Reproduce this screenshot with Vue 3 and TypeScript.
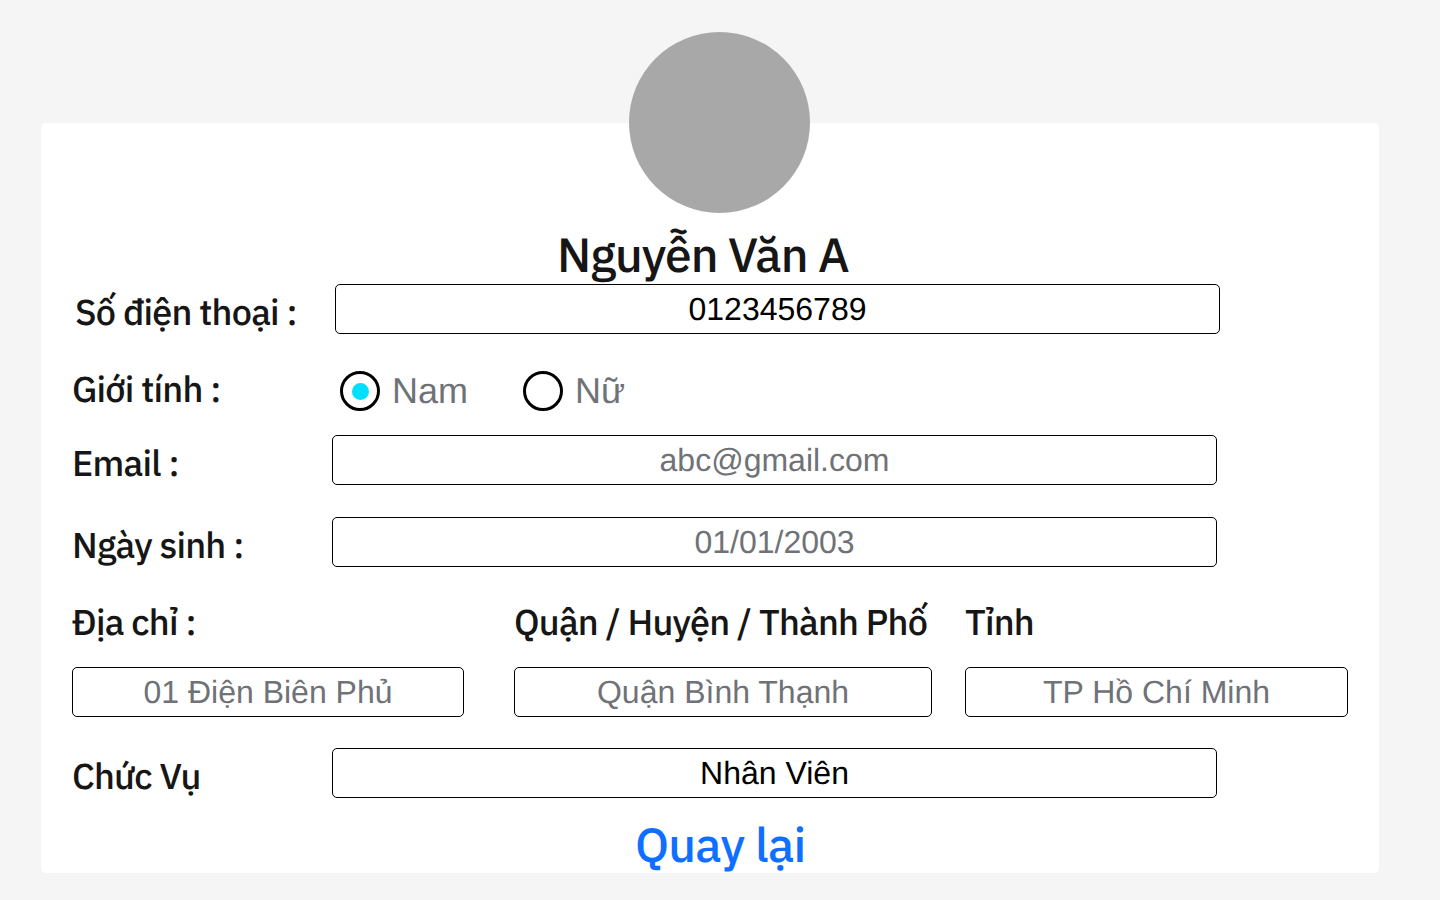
<script setup lang="ts">
interface Place {
  key: string
  label: string
  value: string
}

const gender = 'Nam'
const genders: string[] = ['Nam', 'Nữ']
const places: Place[] = [
  { key: 'street', label: 'Địa chỉ :', value: '01 Điện Biên Phủ' },
  { key: 'district', label: 'Quận / Huyện / Thành Phố', value: 'Quận Bình Thạnh' },
  { key: 'province', label: 'Tỉnh', value: 'TP Hồ Chí Minh' },
]
</script>

<template>
  <main class="page">
    <section class="card">
      <div class="avatar"></div>
      <h1 class="name">Nguyễn Văn A</h1>

      <div class="row phone">
        <span class="label">Số điện thoại :</span>
        <div class="field strong">0123456789</div>
      </div>

      <div class="row gender">
        <span class="label">Giới tính :</span>
        <div class="options">
          <div v-for="item in genders" :key="item" class="option">
            <span class="radio"><i v-if="item === gender" class="dot"></i></span>
            <span>{{ item }}</span>
          </div>
        </div>
      </div>

      <div class="row email">
        <span class="label">Email :</span>
        <div class="field">abc@gmail.com</div>
      </div>

      <div class="row birth">
        <span class="label">Ngày sinh :</span>
        <div class="field">01/01/2003</div>
      </div>

      <div class="places">
        <div v-for="place in places" :key="place.key" :class="place.key">
          <span class="label">{{ place.label }}</span>
          <div class="field">{{ place.value }}</div>
        </div>
      </div>

      <div class="row role">
        <span class="label">Chức Vụ</span>
        <div class="field strong">Nhân Viên</div>
      </div>

      <a class="back">Quay lại</a>
    </section>
  </main>
</template>

<style>
body {
  margin: 0;
  background: #f5f5f5;
}
</style>

<style scoped>
.page {
  box-sizing: border-box;
  width: 1440px;
  height: 900px;
  padding: 123px 61px 27px 41px;
  background: #f5f5f5;
  overflow: hidden;
  font-family: Arial, "Liberation Sans", sans-serif;
  text-rendering: geometricPrecision;
}
.card {
  box-sizing: border-box;
  display: flex;
  flex-direction: column;
  height: 750px;
  padding: 0 31px;
  background: #fff;
  border-radius: 5px;
}
.avatar {
  flex: none;
  width: 181px;
  height: 181px;
  margin: -91px 0 0 557px;
  border-radius: 50%;
  background: #a8a8a8;
}
.name,
.label,
.back {
  font-family: "IBM Plex Sans", "Open Sans", sans-serif;
  font-weight: 500;
  letter-spacing: -0.022em;
  white-space: nowrap;
  color: #161616;
}
.name {
  height: 55px;
  margin: 16px 0 0 485px;
  font-size: 48px;
  line-height: 53px;
  letter-spacing: -1px;
}
.row {
  display: flex;
  flex: none;
  height: 50px;
}
.label {
  display: block;
  flex: none;
  width: 260px;
  font-size: 36px;
  line-height: 55px;
}
.field {
  box-sizing: border-box;
  flex: none;
  width: 885px;
  height: 50px;
  border: 1px solid #000;
  border-radius: 5px;
  font-size: 32px;
  line-height: 48px;
  text-align: center;
  white-space: nowrap;
  color: #6f7277;
}
.strong {
  color: #000;
}
.phone {
  padding-left: 3px;
}
.gender {
  height: 40px;
  margin-top: 37px;
}
.gender .label {
  width: 268px;
  line-height: 35px;
}
.options {
  display: flex;
  font-size: 36px;
  line-height: 39px;
  color: #6f7277;
}
.option {
  display: flex;
  gap: 12px;
  width: 183px;
}
.radio {
  box-sizing: border-box;
  display: flex;
  flex: none;
  width: 40px;
  height: 40px;
  padding: 9px;
  border: 3px solid #000;
  border-radius: 50%;
}
.dot {
  flex: none;
  width: 17px;
  height: 17px;
  border-radius: 50%;
  background: #00dfff;
}
.email {
  margin-top: 24px;
}
.birth {
  margin-top: 32px;
}
.places {
  display: grid;
  flex: none;
  grid-template-columns: 442px 451px 383px;
  margin-top: 31px;
}
.places .label {
  width: auto;
  height: 69px;
  line-height: 47px;
}
.street .field {
  width: 392px;
}
.district .field {
  width: 418px;
}
.province .field {
  width: 383px;
}
.role {
  margin-top: 31px;
}
.back {
  margin: 21px 0 0 563px;
  font-size: 48px;
  line-height: 52px;
  letter-spacing: -0.8px;
  color: #0f6fff;
}
</style>
